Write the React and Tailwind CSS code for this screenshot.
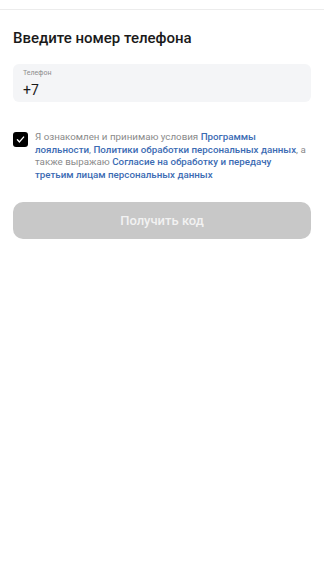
export default function App() {
  return (
    <div className="min-h-screen bg-white" style={{ fontFamily: 'Roboto, "Noto Sans", sans-serif' }}>
      <div className="h-[9px]" />
      <div className="h-px bg-[#ececec]" />
      <div className="px-[13px]">
        <h1 className="mt-[18px] text-[15px] leading-[20px] font-medium text-[#1a1a1a]">
          Введите номер телефона
        </h1>
        <div className="mt-[16px] h-[38px] rounded-[6px] bg-[#f4f5f7] px-[10px] pt-[5px]">
          <div className="text-[7px] leading-[9px] text-[#8c8c8c]">Телефон</div>
          <div className="mt-[4px] text-[14px] leading-[16px] text-[#1a1a1a]">+7</div>
        </div>
        <div className="mt-[29px] flex items-start gap-[7px]">
          <div className="mt-[1px] flex h-[15px] w-[15px] shrink-0 items-center justify-center rounded-[3px] bg-black">
            <svg viewBox="0 0 16 16" className="h-[11px] w-[11px]" fill="none" stroke="white" strokeWidth="2" strokeLinecap="round" strokeLinejoin="round">
              <path d="M3.5 8.5l3 3 6-7" />
            </svg>
          </div>
          <p className="text-[9.75px] leading-[12.5px] text-[#8a8a8a]">
            Я ознакомлен и принимаю условия{' '}
            <span className="font-medium text-[#3b6bb3]">Программы лояльности</span>,{' '}
            <span className="font-medium text-[#3b6bb3]">Политики обработки персональных данных</span>, а также выражаю{' '}
            <span className="font-medium text-[#3b6bb3]">Согласие на обработку и передачу третьим лицам персональных данных</span>
          </p>
        </div>
        <button className="mt-[21px] flex h-[37px] w-full items-center justify-center rounded-[10px] bg-[#c8c8c8] text-[13px] font-medium text-[#f2f2f2]">
          Получить код
        </button>
      </div>
    </div>
  )
}
